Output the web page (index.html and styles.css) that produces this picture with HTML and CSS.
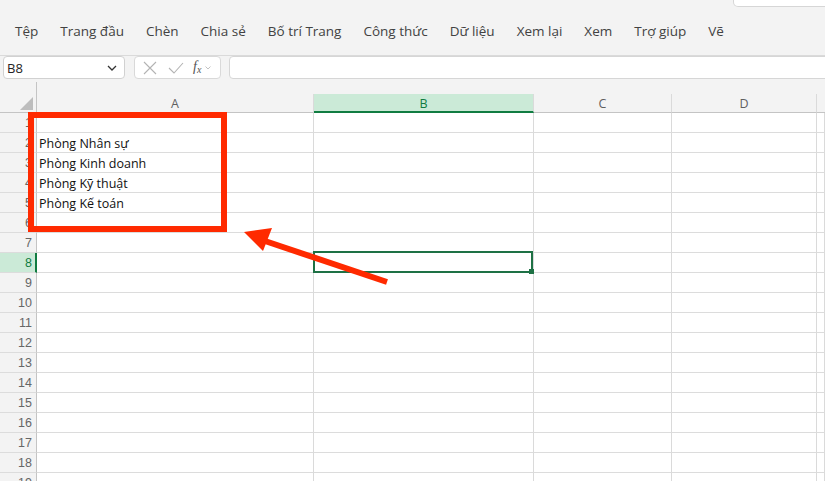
FILE: index.html
```html
<!DOCTYPE html>
<html lang="vi">
<head>
<meta charset="utf-8">
<title>Excel</title>
<link rel="stylesheet" href="styles.css">
</head>
<body>
<div class="app">
  <div class="titlestrip"><div class="search"></div></div>
  <nav class="menu">
    <span>Tệp</span><span>Trang đầu</span><span>Chèn</span><span>Chia sẻ</span><span>Bố trí Trang</span><span>Công thức</span><span>Dữ liệu</span><span>Xem lại</span><span>Xem</span><span>Trợ giúp</span><span>Vẽ</span>
  </nav>
  <div class="fbar">
    <div class="namebox"><span class="nb-text">B8</span>
      <svg class="nb-chev" width="10" height="6" viewBox="0 0 10 6"><path d="M1 1l4 4 4-4" fill="none" stroke="#333" stroke-width="1.3"/></svg>
    </div>
    <div class="fnbox">
      <svg width="14" height="14" viewBox="0 0 14 14"><path d="M1 1l12 12M13 1L1 13" stroke="#b3b3b3" stroke-width="1.1" fill="none"/></svg>
      <svg width="16" height="14" viewBox="0 0 16 14"><path d="M1 7l5 5L15 2" stroke="#b3b3b3" stroke-width="1.1" fill="none"/></svg>
      <span class="fx">f<sub>x</sub></span>
      <svg width="6" height="4" viewBox="0 0 6 4"><path d="M0.5 0.5l2.5 2.5 2.5-2.5" stroke="#bbb" stroke-width="0.9" fill="none"/></svg>
    </div>
    <div class="finput"></div>
  </div>
  <div class="sheet">
    <div class="corner"><div class="tri"></div></div>
    <div class="spacer"></div>
    <div class="ch">A</div><div class="ch sel">B</div><div class="ch">C</div><div class="ch">D</div><div class="ch last"></div>

    <div class="rh">1</div><div class="c"></div><div class="c"></div><div class="c"></div><div class="c"></div><div class="c"></div>
    <div class="rh">2</div><div class="c">Phòng Nhân sự</div><div class="c"></div><div class="c"></div><div class="c"></div><div class="c"></div>
    <div class="rh">3</div><div class="c">Phòng Kinh doanh</div><div class="c"></div><div class="c"></div><div class="c"></div><div class="c"></div>
    <div class="rh">4</div><div class="c">Phòng Kỹ thuật</div><div class="c"></div><div class="c"></div><div class="c"></div><div class="c"></div>
    <div class="rh">5</div><div class="c">Phòng Kế toán</div><div class="c"></div><div class="c"></div><div class="c"></div><div class="c"></div>
    <div class="rh">6</div><div class="c"></div><div class="c"></div><div class="c"></div><div class="c"></div><div class="c"></div>
    <div class="rh">7</div><div class="c"></div><div class="c"></div><div class="c"></div><div class="c"></div><div class="c"></div>
    <div class="rh sel">8</div><div class="c"></div><div class="c active"></div><div class="c"></div><div class="c"></div><div class="c"></div>
    <div class="rh">9</div><div class="c"></div><div class="c"></div><div class="c"></div><div class="c"></div><div class="c"></div>
    <div class="rh">10</div><div class="c"></div><div class="c"></div><div class="c"></div><div class="c"></div><div class="c"></div>
    <div class="rh">11</div><div class="c"></div><div class="c"></div><div class="c"></div><div class="c"></div><div class="c"></div>
    <div class="rh">12</div><div class="c"></div><div class="c"></div><div class="c"></div><div class="c"></div><div class="c"></div>
    <div class="rh">13</div><div class="c"></div><div class="c"></div><div class="c"></div><div class="c"></div><div class="c"></div>
    <div class="rh">14</div><div class="c"></div><div class="c"></div><div class="c"></div><div class="c"></div><div class="c"></div>
    <div class="rh">15</div><div class="c"></div><div class="c"></div><div class="c"></div><div class="c"></div><div class="c"></div>
    <div class="rh">16</div><div class="c"></div><div class="c"></div><div class="c"></div><div class="c"></div><div class="c"></div>
    <div class="rh">17</div><div class="c"></div><div class="c"></div><div class="c"></div><div class="c"></div><div class="c"></div>
    <div class="rh">18</div><div class="c"></div><div class="c"></div><div class="c"></div><div class="c"></div><div class="c"></div>
    <div class="rh">19</div><div class="c"></div><div class="c"></div><div class="c"></div><div class="c"></div><div class="c"></div>
  </div>
  <svg class="annot" width="825" height="481" viewBox="0 0 825 481">
    <rect x="31" y="115" width="193" height="114" fill="none" stroke="#ff2a00" stroke-width="6"/>
    <line x1="262" y1="240" x2="387" y2="282" stroke="#ff2a00" stroke-width="6"/>
    <polygon points="244,232 272,228 263,251" fill="#ff2a00"/>
  </svg>
</div>
</body>
</html>
```

FILE: styles.css
```css
* { box-sizing: border-box; }
html, body { margin: 0; padding: 0; }
body {
  width: 825px;
  height: 481px;
  overflow: hidden;
  background: #f3f3f3;
  font-family: "Open Sans", "Noto Sans", sans-serif;
}
.app { position: relative; width: 825px; height: 481px; overflow: hidden; }

.titlestrip { height: 8px; display: flex; justify-content: flex-end; }
.search {
  width: 96px; height: 7px; margin-right: -4px;
  background: #fff; border: 1px solid #d6d6d6; border-top: none;
  border-radius: 0 0 0 5px;
}

.menu {
  height: 48px;
  display: flex; align-items: center; gap: 22px;
  padding: 0 0 1px 15px;
  border-bottom: 1px solid #dadada;
  font-size: 13.5px; color: #424242;
}

.fbar { height: 26px; display: flex; align-items: flex-start; padding-left: 3px; }
.namebox {
  width: 122px; height: 23px;
  background: #fff; border: 1px solid #d1d1d1; border-radius: 4px;
  display: flex; align-items: center; justify-content: space-between;
  padding: 0 7px 0 3px;
  font-size: 13px; color: #242424;
}
.nb-chev { margin-top: 1px; }
.fnbox {
  margin-left: 9px; width: 87px; height: 23px;
  background: #fff; border: 1px solid #d9d9d9; border-radius: 4px;
  display: flex; align-items: center; gap: 0; padding-left: 8px;
}
.fnbox svg:nth-child(1) { margin-right: 11px; }
.fnbox svg:nth-child(2) { margin-right: 9px; }
.fx {
  font-family: "Liberation Serif", serif; font-style: italic;
  font-size: 14px; color: #555; margin-right: 4px; line-height: 1;
}
.fx sub { font-size: 10px; vertical-align: -2px; }
.finput {
  margin-left: 8px; flex: 1; margin-right: -10px; height: 23px;
  background: #fff; border: 1px solid #d6d6d6; border-radius: 4px;
}

.sheet {
  display: grid;
  grid-template-columns: 37px 277px 220px 138px 145px 1fr;
  grid-template-rows: 12px 19px repeat(19, 20px);
}
.corner {
  grid-row: 1 / span 2; grid-column: 1;
  position: relative;
  border-right: 1px solid #c4c4c4;
  border-bottom: 1px solid #c4c4c4;
}
.tri {
  position: absolute; right: 3px; bottom: 2px;
  width: 0; height: 0;
  border-left: 13px solid transparent;
  border-bottom: 13px solid #bdbdbd;
}
.spacer { grid-row: 1; grid-column: 2 / -1; }
.ch {
  border-right: 1px solid #dadada;
  border-bottom: 1px solid #c4c4c4;
  display: flex; align-items: center; justify-content: center;
  font-size: 12.5px; color: #5f5f5f; padding-top: 1px;
}
.ch.last { border-right: none; }
.ch.sel {
  background: #cbead7; color: #107c41;
  border-bottom: 2px solid #107c41;
  padding-top: 2px;
}
.rh {
  border-right: 1px solid #c4c4c4;
  border-bottom: 1px solid #dcdcdc;
  display: flex; align-items: center; justify-content: flex-end;
  padding: 1px 4px 0 0;
  font-family: "Liberation Sans", Arial, sans-serif;
  font-size: 12.5px; color: #666;
}
.rh.sel {
  background: #cbead7; color: #107c41;
  border-right: 2px solid #107c41;
  padding-right: 3px;
}
.c {
  background: #fff;
  border-right: 1px solid #dadada;
  border-bottom: 1px solid #dcdcdc;
  padding: 0 3px 0 2px;
  display: flex; align-items: flex-end;
  padding-bottom: 0;
  font-size: 12.5px; color: #111;
  white-space: nowrap;
}
.c.active { position: relative; }
.c.active::before {
  content: ""; position: absolute;
  top: -2px; left: -1px; right: 0; bottom: -1px;
  border: 2px solid #1e7145;
}
.c.active::after {
  content: ""; position: absolute;
  width: 5px; height: 5px; right: -1px; bottom: -2px;
  background: #1e7145; border: 0;
}

.annot { position: absolute; left: 0; top: 0; pointer-events: none; }
```
